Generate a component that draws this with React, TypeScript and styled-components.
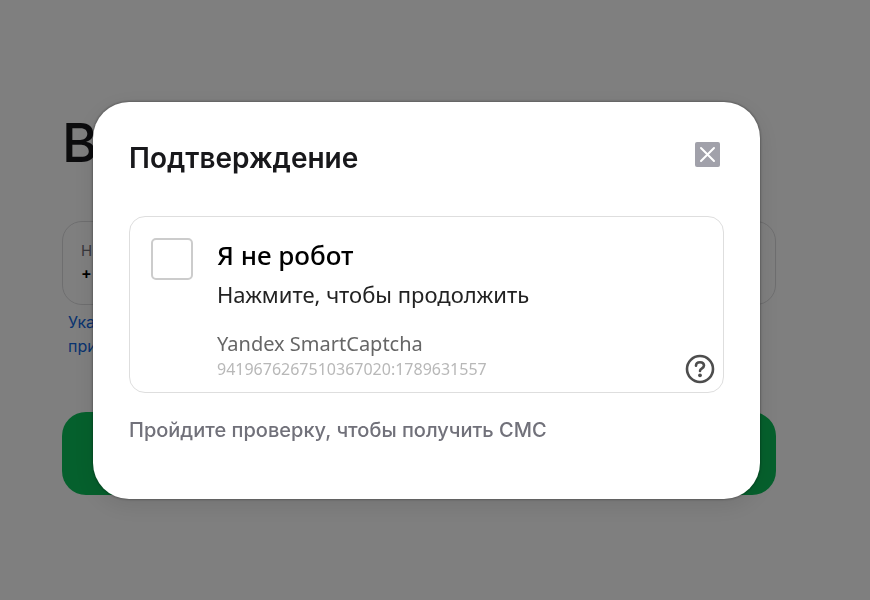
import React from "react";
import styled, { createGlobalStyle } from "styled-components";

const GlobalStyle = createGlobalStyle`
  *, *::before, *::after { box-sizing: border-box; }
  body {
    margin: 0;
    background: #ffffff;
    font-family: Inter, "Liberation Sans", sans-serif;
    color: #18181b;
  }
  h1, h2, p { margin: 0; }
`;

const Page = styled.main`
  min-height: 100vh;
  padding: 105px 94px 105px 62px;
`;

const LoginForm = styled.form`
  display: flex;
  flex-direction: column;
`;

const PageTitle = styled.h1`
  font-size: 54px;
  line-height: 76px;
  font-weight: 500;
`;

const PhoneField = styled.label`
  display: flex;
  flex-direction: column;
  height: 84px;
  margin-top: 40px;
  padding: 18px;
  border: 1px solid #dddddf;
  border-radius: 20px;
  font-size: 15px;
  line-height: 22px;
  color: #71717a;
`;

const PhoneInput = styled.input`
  width: 100%;
  height: 22px;
  padding: 0;
  border: 0;
  outline: 0;
  background: transparent;
  font: 600 16px/22px Inter, sans-serif;
  color: #000000;
`;

const Hint = styled.a`
  margin-top: 5px;
  padding-left: 6px;
  font-size: 16px;
  line-height: 24px;
  color: #1067e0;
  text-decoration: none;
`;

const SubmitButton = styled.button`
  height: 83px;
  margin-top: 54px;
  border: 0;
  border-radius: 24px;
  background: #0bc15a;
`;

const Overlay = styled.div`
  position: fixed;
  inset: 0;
  display: flex;
  align-items: center;
  padding: 0 110px 0 93px;
  background: rgba(0, 0, 0, 0.5);
`;

const Dialog = styled.section`
  flex: 1;
  min-width: 0;
  padding: 36px 36px 55px;
  border-radius: 36px;
  background: #ffffff;
  box-shadow: 0 0 3px rgba(0, 0, 0, 0.5), 0 6px 24px rgba(0, 0, 0, 0.1);
`;

const DialogHeader = styled.header`
  display: flex;
  align-items: center;
  justify-content: space-between;
  padding-right: 4px;
`;

const DialogTitle = styled.h2`
  padding-top: 2px;
  font-size: 28px;
  line-height: 36px;
  font-weight: 600;
`;

const CloseButton = styled.button`
  display: flex;
  width: 25px;
  height: 25px;
  margin-bottom: 4px;
  padding: 0;
  border: 0;
  border-radius: 2px;
  background: #a1a1aa;
`;

const CaptchaCard = styled.div`
  display: flex;
  gap: 24px;
  height: 177px;
  margin-top: 40px;
  padding: 21px 8px 8px 21px;
  border: 1px solid #dedede;
  border-radius: 16px;
`;

const RobotCheckbox = styled.input`
  flex: none;
  appearance: none;
  width: 42px;
  height: 42px;
  margin: 0;
  border: 2px solid #cccccc;
  border-radius: 5px;
  background: #ffffff;
`;

const CaptchaText = styled.div`
  flex: 1;
  min-width: 0;
  font-family: "Noto Sans", sans-serif;
`;

const RobotLabel = styled.label`
  display: block;
  font-size: 26px;
  line-height: 34px;
  font-weight: 500;
  color: #000000;
`;

const RobotHint = styled.p`
  margin-top: 4px;
  font-size: 22px;
  line-height: 36px;
  color: #222222;
`;

const CaptchaBrand = styled.p`
  margin-top: 18px;
  font-size: 20px;
  line-height: 28px;
  color: #666666;
`;

const CaptchaId = styled.p`
  font-size: 16px;
  line-height: 22px;
  color: #b8b8b8;
`;

const HelpButton = styled.button`
  display: flex;
  align-self: flex-end;
  padding: 0;
  border: 0;
  background: transparent;
  color: #4d4d4d;
`;

const DialogNote = styled.p`
  margin-top: 23px;
  font-size: 20px;
  line-height: 28px;
  font-weight: 500;
  color: #71717a;
`;

function CloseIcon() {
  return (
    <svg width="25" height="25" viewBox="0 0 25 25" fill="none" aria-hidden="true">
      <path d="M6 6L19 19M19 6L6 19" stroke="#ffffff" strokeWidth="2" strokeLinecap="round" />
    </svg>
  );
}

function HelpIcon() {
  return (
    <svg width="30" height="30" viewBox="0 0 30 30" fill="none" aria-hidden="true">
      <circle cx="15" cy="15" r="13" stroke="currentColor" strokeWidth="2.6" />
      <path
        d="M11 11.8C11 9.6 12.6 8.2 15 8.2C17.4 8.2 19 9.6 19 11.6C19 14.4 15 14.2 15 17"
        stroke="currentColor"
        strokeWidth="2.6"
        strokeLinecap="round"
      />
      <circle cx="15" cy="21.3" r="1.9" fill="currentColor" />
    </svg>
  );
}

export default function App() {
  return (
    <>
      <GlobalStyle />
      <Page>
        <LoginForm onSubmit={(event) => event.preventDefault()}>
          <PageTitle>В</PageTitle>
          <PhoneField>
            Н
            <PhoneInput type="tel" defaultValue="+" />
          </PhoneField>
          <Hint href="#help">
            Ука
            <br />
            при
          </Hint>
          <SubmitButton type="submit" aria-label="Войти" />
        </LoginForm>
      </Page>
      <Overlay>
        <Dialog role="dialog" aria-modal="true" aria-labelledby="dialog-title">
          <DialogHeader>
            <DialogTitle id="dialog-title">Подтверждение</DialogTitle>
            <CloseButton type="button" aria-label="Закрыть">
              <CloseIcon />
            </CloseButton>
          </DialogHeader>
          <CaptchaCard>
            <RobotCheckbox type="checkbox" id="robot" />
            <CaptchaText>
              <RobotLabel htmlFor="robot">Я не робот</RobotLabel>
              <RobotHint>Нажмите, чтобы продолжить</RobotHint>
              <CaptchaBrand>Yandex SmartCaptcha</CaptchaBrand>
              <CaptchaId>9419676267510367020:1789631557</CaptchaId>
            </CaptchaText>
            <HelpButton type="button" aria-label="Справка">
              <HelpIcon />
            </HelpButton>
          </CaptchaCard>
          <DialogNote>Пройдите проверку, чтобы получить СМС</DialogNote>
        </Dialog>
      </Overlay>
    </>
  );
}
